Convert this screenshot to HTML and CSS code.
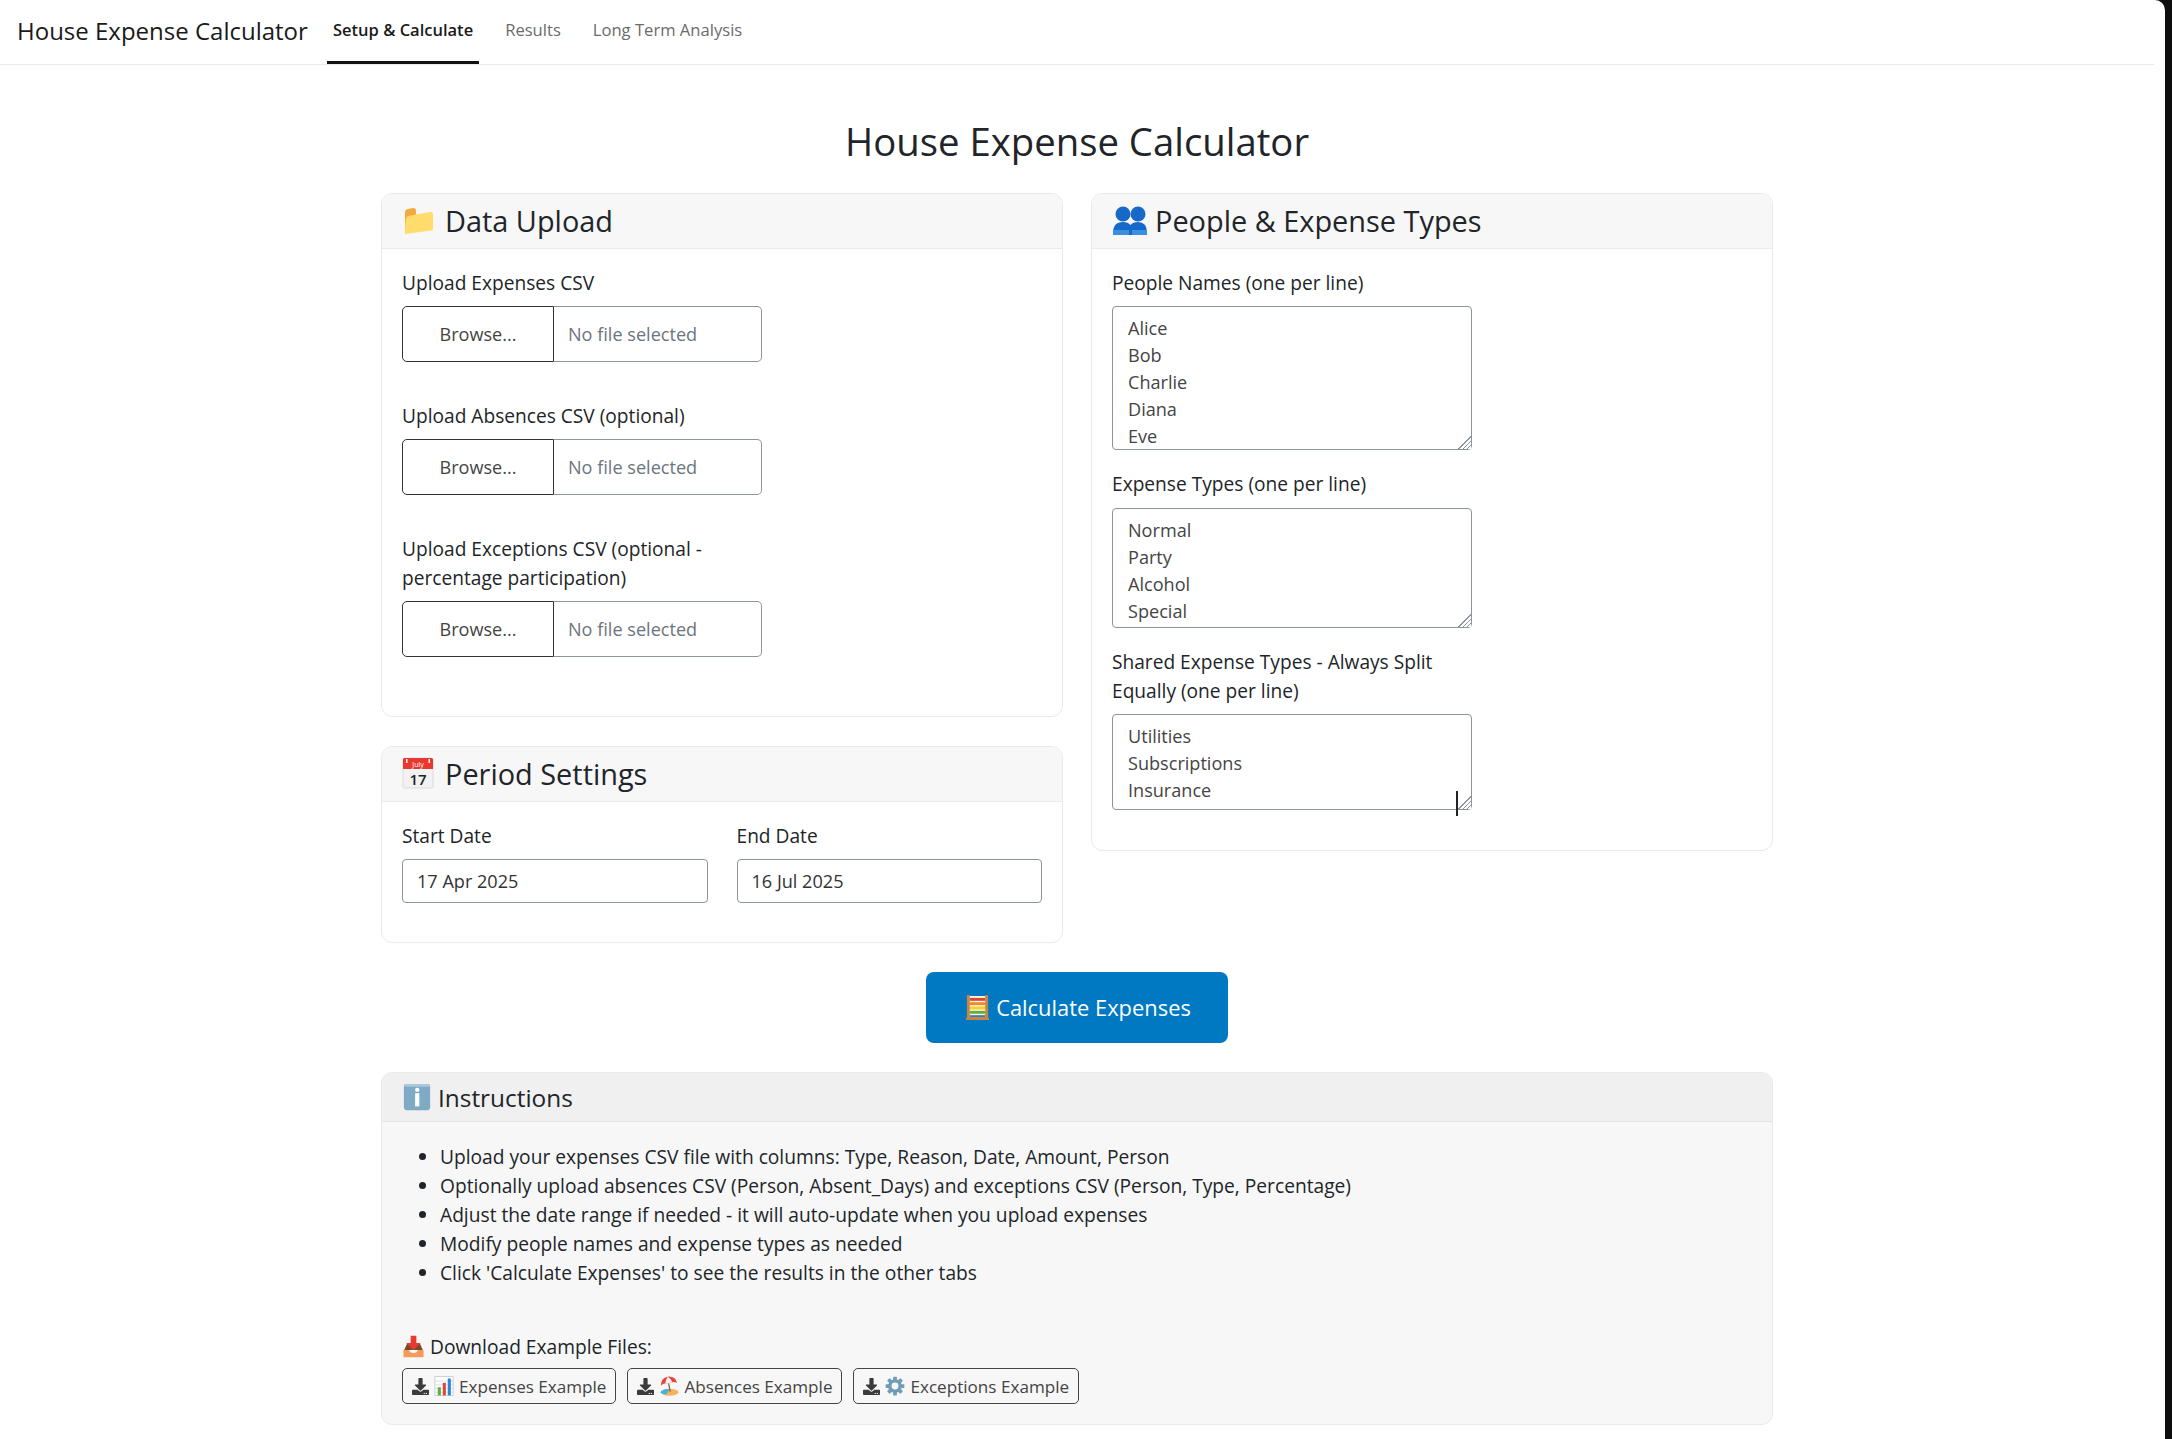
FILE: index.html
```html
<!DOCTYPE html>
<html lang="en">
<head>
    <meta charset="UTF-8">
    <title>House Expense Calculator</title>
    <link rel="stylesheet" href="styles.css">
</head>
<body>
    <svg class="defs" width="0" height="0">
        <symbol id="ico-folder" viewBox="0 0 32 32">
            <path fill="#f4a93f" d="M3 9 Q3 5 6 5 L11 4 Q14 4 14 7 L14 10 L3 30 Z"/>
            <path fill="#ffdc6b" d="M3 30 Q3 13 6 12 L28 8 Q31 7.5 31 10 L31 25 Q31 26 29 26.500 Z"/>
        </symbol>
        <symbol id="ico-people" viewBox="0 0 36 32">
            <g fill="#1668c9">
                <circle cx="11" cy="10" r="7.500"/>
                <circle cx="26" cy="10" r="7.500"/>
                <path d="M1 29 Q1 18 11 18 Q16 18 18.500 21 Q21 18 26 18 Q35 18 35 29 L35 31 L1 31 Z"/>
            </g>
            <path fill="#3b8fe0" d="M1 26 L17 26 L17 31 L1 31 Z M20 26 L35 26 L35 31 L20 31 Z"/>
        </symbol>
        <symbol id="ico-abacus" viewBox="0 0 24 26">
            <rect x="1" y="1" width="22" height="24" fill="#fff3d6"/>
            <rect x="4" y="3" width="16" height="3" fill="#d9453a"/>
            <rect x="4" y="7.500" width="16" height="3" fill="#f08a24"/>
            <rect x="4" y="12" width="16" height="3" fill="#f5cf2f"/>
            <rect x="4" y="16.500" width="16" height="3" fill="#5fb043"/>
            <rect x="4" y="21" width="16" height="2" fill="#2f7fc8"/>
            <path fill="#c98440" d="M1 0 H4 V23 H20 V0 H23 V24 H24 V26 H0 V24 H1 Z"/>
        </symbol>
        <symbol id="ico-info" viewBox="0 0 32 32">
            <rect x="2" y="2" width="28" height="28" rx="3" fill="#7faac4"/>
            <rect x="2" y="2" width="28" height="3" rx="1.500" fill="#a9c8da"/>
            <rect x="14" y="12" width="4.500" height="14" fill="#fff"/>
            <rect x="14" y="6" width="4.500" height="4.500" rx="2" fill="#fff"/>
        </symbol>
        <symbol id="ico-inbox" viewBox="0 0 32 32">
            <path fill="#7b4a2d" d="M7 12 H25 L29 21 H3 Z"/>
            <path fill="#f49b5c" d="M2 21 H10 Q11 25 16 25 Q21 25 22 21 H30 V30 Q30 31 29 31 H3 Q2 31 2 30 Z"/>
            <path fill="#e83b30" d="M12 1 H20 V11 H26 L16 21 L6 11 H12 Z"/>
        </symbol>
        <symbol id="ico-chart" viewBox="0 0 32 32">
            <rect x="1.500" y="1" width="29" height="30" fill="#fff" stroke="#bcc6ce" stroke-width="1.200"/>
            <path stroke="#cfd6dc" stroke-width="1.200" d="M2 8 H30 M2 14 H30 M2 20 H30 M2 26 H30"/>
            <rect x="6" y="18" width="5" height="13" fill="#5cae4b"/>
            <rect x="14" y="11" width="5" height="20" fill="#e4453a"/>
            <rect x="22" y="4" width="5" height="27" fill="#2e86d6"/>
        </symbol>
        <symbol id="ico-beach" viewBox="0 0 32 32">
            <ellipse cx="17" cy="26" rx="14" ry="5.500" fill="#f6b45c"/>
            <path fill="#42b3e6" d="M2 26 Q8 20 17 21 L12 29 Q5 30 2 26 Z"/>
            <path stroke="#8a5a34" stroke-width="2" d="M15 10 L18 25"/>
            <path fill="#e8453a" d="M3 15 Q3 3 14 1 Q26 0 29 11 Q22 8 16 12 Q9 10 3 15 Z"/>
            <path fill="#f4f4f4" d="M10 12 Q11 5 14 1 Q19 4 21 9 Q18 10 16 12 Q13 11 10 12 Z"/>
        </symbol>
        <symbol id="ico-gear" viewBox="0 0 32 32">
            <g fill="#6f9db8">
                <circle cx="16" cy="16" r="11"/>
                <rect x="13" y="1" width="6" height="30" rx="1"/>
                <rect x="13" y="1" width="6" height="30" rx="1" transform="rotate(45 16 16)"/>
                <rect x="13" y="1" width="6" height="30" rx="1" transform="rotate(90 16 16)"/>
                <rect x="13" y="1" width="6" height="30" rx="1" transform="rotate(135 16 16)"/>
            </g>
            <circle cx="16" cy="16" r="5.500" fill="#f7f7f7"/>
        </symbol>
        <symbol id="ico-download" viewBox="0 0 512 512">
            <path fill="#3b3b3b" d="M216 0h80c13.300 0 24 10.700 24 24v168h87.700c17.800 0 26.700 21.500 14.100 34.100L269.700 378.300c-7.500 7.500-19.800 7.500-27.300 0L90.100 226.100c-12.600-12.600-3.700-34.100 14.100-34.100H192V24c0-13.300 10.700-24 24-24zm296 376v112c0 13.300-10.700 24-24 24H24c-13.300 0-24-10.700-24-24V376c0-13.300 10.700-24 24-24h146.700l49 49c20.100 20.100 52.500 20.100 72.600 0l49-49H488c13.300 0 24 10.700 24 24zm-124 88c0-11-9-20-20-20s-20 9-20 20 9 20 20 20 20-9 20-20zm64 0c0-11-9-20-20-20s-20 9-20 20 9 20 20 20 20-9 20-20z"/>
        </symbol>
    </svg>

    <div class="page">
        <nav class="navbar">
            <span class="brand">House Expense Calculator</span>
            <a class="tab active">Setup &amp; Calculate</a>
            <a class="tab">Results</a>
            <a class="tab">Long Term Analysis</a>
        </nav>

        <main class="content">
            <h1 class="page_title">House Expense Calculator</h1>

            <div class="columns">
                <div class="column">
                    <section class="card">
                        <h2 class="card_header"><svg class="ico_head"><use href="#ico-folder"/></svg>Data Upload</h2>
                        <div class="card_body upload_body">
                            <div class="field">
                                <label class="label">Upload Expenses CSV</label>
                                <div class="file_input"><span class="browse">Browse...</span><span class="file_name">No file selected</span></div>
                            </div>
                            <div class="field">
                                <label class="label">Upload Absences CSV (optional)</label>
                                <div class="file_input"><span class="browse">Browse...</span><span class="file_name">No file selected</span></div>
                            </div>
                            <div class="field">
                                <label class="label">Upload Exceptions CSV (optional - percentage participation)</label>
                                <div class="file_input"><span class="browse">Browse...</span><span class="file_name">No file selected</span></div>
                            </div>
                        </div>
                    </section>

                    <section class="card">
                        <h2 class="card_header">
                            <svg class="ico_head" viewBox="0 0 32 32">
                                <rect x="1" y="1" width="30" height="30" rx="1.500" fill="#f2f2f2" stroke="#ccc" stroke-width="0.600"/>
                                <path fill="#e8382f" d="M1 2.500 Q1 1 2.500 1 L29.500 1 Q31 1 31 2.500 L31 12 L1 12 Z"/>
                                <rect x="4" y="2" width="1.500" height="4" fill="#fff"/>
                                <rect x="26.500" y="2" width="1.500" height="4" fill="#fff"/>
                                <text x="16" y="9.500" class="cal_month">July</text>
                                <text x="16" y="28" class="cal_day">17</text>
                            </svg>Period Settings
                        </h2>
                        <div class="card_body date_body">
                            <div class="date_field">
                                <label class="label">Start Date</label>
                                <input class="date_input" type="text" value="17 Apr 2025">
                            </div>
                            <div class="date_field">
                                <label class="label">End Date</label>
                                <input class="date_input" type="text" value="16 Jul 2025">
                            </div>
                        </div>
                    </section>
                </div>

                <div class="column">
                    <section class="card">
                        <h2 class="card_header"><svg class="ico_head ico_people"><use href="#ico-people"/></svg>People &amp; Expense Types</h2>
                        <div class="card_body people_body">
                            <div class="text_field">
                                <label class="label">People Names (one per line)</label>
                                <textarea class="text_box box_people">Alice
Bob
Charlie
Diana
Eve</textarea>
                            </div>
                            <div class="text_field">
                                <label class="label">Expense Types (one per line)</label>
                                <textarea class="text_box box_types">Normal
Party
Alcohol
Special</textarea>
                            </div>
                            <div class="text_field">
                                <label class="label">Shared Expense Types - Always Split Equally (one per line)</label>
                                <div class="box_wrap">
                                    <textarea class="text_box box_shared">Utilities
Subscriptions
Insurance</textarea>
                                    <span class="mouse_caret"></span>
                                </div>
                            </div>
                        </div>
                    </section>
                </div>
            </div>

            <div class="action_row">
                <button class="btn_calc"><svg class="ico_abacus"><use href="#ico-abacus"/></svg>Calculate Expenses</button>
            </div>

            <section class="card card_info">
                <h3 class="info_header"><svg class="ico_info"><use href="#ico-info"/></svg>Instructions</h3>
                <div class="info_body">
                    <ul class="steps">
                        <li>Upload your expenses CSV file with columns: Type, Reason, Date, Amount, Person</li>
                        <li>Optionally upload absences CSV (Person, Absent_Days) and exceptions CSV (Person, Type, Percentage)</li>
                        <li>Adjust the date range if needed - it will auto-update when you upload expenses</li>
                        <li>Modify people names and expense types as needed</li>
                        <li>Click 'Calculate Expenses' to see the results in the other tabs</li>
                    </ul>
                    <p class="download_title"><svg class="ico_inbox"><use href="#ico-inbox"/></svg>Download Example Files:</p>
                    <div class="download_row">
                        <a class="btn_dl"><svg class="ico_dl"><use href="#ico-download"/></svg><svg class="ico_emoji"><use href="#ico-chart"/></svg>Expenses Example</a>
                        <a class="btn_dl"><svg class="ico_dl"><use href="#ico-download"/></svg><svg class="ico_emoji"><use href="#ico-beach"/></svg>Absences Example</a>
                        <a class="btn_dl"><svg class="ico_dl"><use href="#ico-download"/></svg><svg class="ico_emoji"><use href="#ico-gear"/></svg>Exceptions Example</a>
                    </div>
                </div>
            </section>
        </main>
    </div>
</body>
</html>
```

FILE: styles.css
```css
*{
    box-sizing: border-box;
}
html, body{
    margin: 0;
    height: 100%;
    overflow: hidden;
}
body{
    background-color: #0d0d0d;
    font-family: "Open Sans", "Noto Sans", sans-serif;
    color: #212529;
}
.defs{
    position: absolute;
}
.cal_month{
    font-size: 7px;
    fill: #fff;
    text-anchor: middle;
}
.cal_day{
    font-size: 15px;
    font-weight: 600;
    fill: #222;
    text-anchor: middle;
}

.page{
    width: 2165px;
    height: 1439px;
    padding-right: 11px;
    background-color: #fff;
    border-top-right-radius: 10px;
}

/* nav */
.navbar{
    display: flex;
    align-items: stretch;
    height: 65px;
    padding-left: 17px;
    border-bottom: 1px solid #e6e9ee;
}
.brand{
    width: 310px;
    font-size: 24px;
    line-height: 62px;
    color: #1a1a1a;
}
.tab{
    margin-right: 20px;
    padding: 0 6px;
    height: 64px;
    font-size: 16.600px;
    line-height: 59px;
    color: #6b6b6b;
}
.tab.active{
    font-size: 16.500px;
    font-weight: 600;
    color: #1a1a1a;
    border-bottom: 3px solid #111;
}

/* main */
.content{
    width: 1392px;
    margin: 0 auto;
}
.page_title{
    margin: 0;
    padding-top: 49px;
    height: 128px;
    font-size: 38.300px;
    line-height: 54px;
    font-weight: 400;
    text-align: center;
    color: #212529;
}
.columns{
    display: flex;
    gap: 28px;
    align-items: flex-start;
}
.column{
    flex: 1;
    display: flex;
    flex-direction: column;
    gap: 29px;
}

/* cards */
.card{
    border: 1px solid #e9eaec;
    border-radius: 11px;
    background-color: #fff;
    overflow: hidden;
}
.card_header{
    display: flex;
    align-items: center;
    margin: 0;
    height: 55px;
    padding: 0 0 2px 20px;
    font-size: 28.900px;
    font-weight: 400;
    background-color: #f7f7f7;
    border-bottom: 1px solid #e9eaec;
}
.ico_head{
    width: 32px;
    height: 32px;
    margin-right: 11px;
}
.ico_people{
    width: 36px;
    margin-right: 7px;
}
.card_body{
    padding: 19.500px 20px 20px;
}
.upload_body{
    height: 467px;
}
.people_body{
    height: 601px;
}
.date_body{
    display: flex;
    gap: 29px;
    height: 140px;
}

/* form */
.label{
    display: block;
    max-width: 360px;
    margin-bottom: 8.500px;
    font-size: 19.150px;
    line-height: 29px;
}
.field{
    width: 360px;
    margin-bottom: 39.500px;
}
.text_field{
    width: 360px;
    margin-bottom: 20px;
}
.file_input{
    display: flex;
    height: 56px;
    font-size: 18.100px;
    line-height: 55px;
}
.browse{
    width: 152px;
    text-align: center;
    color: #444;
    border: 1px solid #333;
    border-radius: 5px 0 0 5px;
}
.file_name{
    flex: 1;
    padding-left: 14px;
    color: #6c757d;
    border: 1px solid #8d949e;
    border-left: none;
    border-radius: 0 5px 5px 0;
}
.date_field{
    flex: 1;
}
.date_input{
    display: block;
    width: 100%;
    height: 44px;
    padding: 0 14px;
    font: inherit;
    font-size: 18.100px;
    color: #333;
    border: 1px solid #8d949e;
    border-radius: 4px;
    outline: none;
}
.text_box{
    display: block;
    width: 360px;
    margin: 0;
    padding: 8px 15px;
    font-family: inherit;
    font-size: 18.100px;
    line-height: 27px;
    color: #444;
    border: 1px solid #8d949e;
    border-radius: 4px;
    overflow: hidden;
    resize: both;
    outline: none;
}
.text_box::-webkit-resizer{
    background: linear-gradient(135deg, #fff 50%, transparent 50%), repeating-linear-gradient(135deg, #8d949e 0 1px, #fff 1px 3px);
}
.box_people{
    height: 144px;
}
.box_types{
    height: 120px;
}
.box_shared{
    height: 96px;
}
.box_wrap{
    position: relative;
}
.mouse_caret{
    position: absolute;
    left: 344px;
    top: 77px;
    width: 2px;
    height: 25px;
    background-color: #222;
}

/* calculate button */
.action_row{
    display: flex;
    justify-content: center;
    padding: 29px 0;
}
.btn_calc{
    display: flex;
    align-items: center;
    justify-content: center;
    width: 302px;
    height: 71px;
    padding: 0 0 0 3px;
    font-family: inherit;
    font-size: 21.900px;
    color: #fff;
    background-color: #0079c2;
    border: none;
    border-radius: 8px;
}
.ico_abacus{
    width: 23px;
    height: 25px;
    margin-right: 7px;
}

/* instructions */
.card_info{
    height: 353px;
    background-color: #f7f7f7;
}
.info_header{
    display: flex;
    align-items: center;
    margin: 0;
    height: 49px;
    padding-left: 20px;
    font-size: 24.400px;
    font-weight: 400;
    background-color: #f0f0f0;
    border-bottom: 1px solid #e2e3e5;
}
.ico_info{
    width: 30px;
    height: 30px;
    margin-right: 6px;
}
.info_body{
    padding: 20px 20px 0;
}
.steps{
    margin: 0 0 45px;
    padding-left: 38px;
    font-size: 19.200px;
    line-height: 29px;
}
.download_title{
    display: flex;
    align-items: center;
    margin: 0 0 7px;
    font-size: 19.200px;
    line-height: 29px;
}
.ico_inbox{
    width: 23px;
    height: 23px;
    margin-right: 5px;
}
.download_row{
    display: flex;
    gap: 11px;
}
.btn_dl{
    display: flex;
    align-items: center;
    height: 36px;
    padding: 0 9px;
    font-size: 17.100px;
    color: #444;
    border: 1px solid #444;
    border-radius: 5px;
}
.ico_dl{
    width: 17px;
    height: 17px;
    margin-right: 5px;
}
.ico_emoji{
    width: 20px;
    height: 20px;
    margin-right: 5px;
}
```
